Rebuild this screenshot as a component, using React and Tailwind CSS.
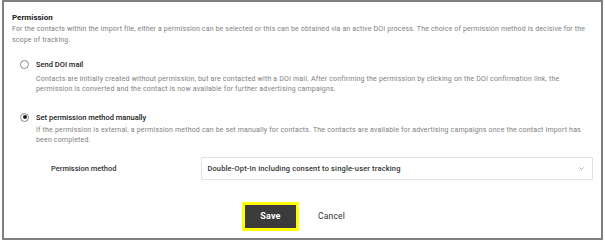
export default function App() {
  const body = "font-['Roboto',sans-serif]";
  return (
    <div className={`w-[605px] h-[243px] bg-white ${body}`}>
      <div className="ml-[2px] w-[601px] h-[240px] border-2 border-[#7f7f7f] px-[8px] pt-[10px]">
        <div className="text-[8px] leading-[11px] font-bold text-[#222]">Permission</div>
        <div className="mt-[1px] text-[7px] leading-[11px] text-[#808080] tracking-[0.15px] whitespace-nowrap">
          For the contacts within the import file, either a permission can be selected or this can be obtained via an active DOI process. The choice of permission method is decisive for the
          <br />
          scope of tracking.
        </div>

        <div className="mt-[12.5px] flex">
          <div className="w-[24px] flex justify-start pl-[8px] pt-[1px]">
            <div className="w-[9px] h-[9px] rounded-full border border-[#8a8a8a] bg-white" />
          </div>
          <div>
            <div className="text-[7.5px] leading-[11px] font-medium text-[#222]">Send DOI mail</div>
            <div className="mt-[4px] text-[7px] leading-[10.5px] text-[#808080] tracking-[0.18px] whitespace-nowrap">
              Contacts are initially created without permission, but are contacted with a DOI mail. After confirming the permission by clicking on the DOI confirmation link, the
              <br />
              permission is converted and the contact is now available for further advertising campaigns.
            </div>
          </div>
        </div>

        <div className="mt-[17px] flex">
          <div className="w-[24px] flex justify-start pl-[8px] pt-[1px]">
            <div className="w-[9px] h-[9px] rounded-full border border-[#8a8a8a] bg-white flex items-center justify-center">
              <div className="w-[4px] h-[4px] rounded-full bg-[#222]" />
            </div>
          </div>
          <div>
            <div className="text-[7.5px] leading-[11px] font-medium text-[#222]">Set permission method manually</div>
            <div className="mt-[2px] text-[7px] leading-[10.5px] text-[#808080] tracking-[0.18px] whitespace-nowrap">
              If the permission is external, a permission method can be set manually for contacts. The contacts are available for advertising campaigns once the contact import has
              <br />
              been completed.
            </div>
          </div>
        </div>

        <div className="mt-[11.5px] flex items-center">
          <div className="w-[190px] pl-[39px] text-[7.5px] font-medium text-[#333]">Permission method</div>
          <div className="w-[393px] h-[23px] border border-[#e2e2e2] rounded-[1px] flex items-center justify-between pl-[5px] pr-[8px]">
            <span className="text-[7.5px] font-medium text-[#333] tracking-[0.15px]">Double-Opt-In including consent to single-user tracking</span>
            <svg width="5" height="3" viewBox="0 0 5 3">
              <path d="M0.5 0.5 L2.5 2.5 L4.5 0.5" fill="none" stroke="#999" strokeWidth="0.8" />
            </svg>
          </div>
        </div>

        <div className="mt-[22px] flex justify-center items-center">
          <div className="ml-[-4px] border-[3px] border-[#ffff00] bg-[#ffff00]">
            <div className="w-[51px] h-[23px] bg-[#3b3b3b] flex items-center justify-center text-[9px] font-bold text-white tracking-[0.2px]">Save</div>
          </div>
          <div className="ml-[5px] px-[14px] text-[8.5px] text-[#333] tracking-[0.2px]">Cancel</div>
        </div>
      </div>
    </div>
  );
}
